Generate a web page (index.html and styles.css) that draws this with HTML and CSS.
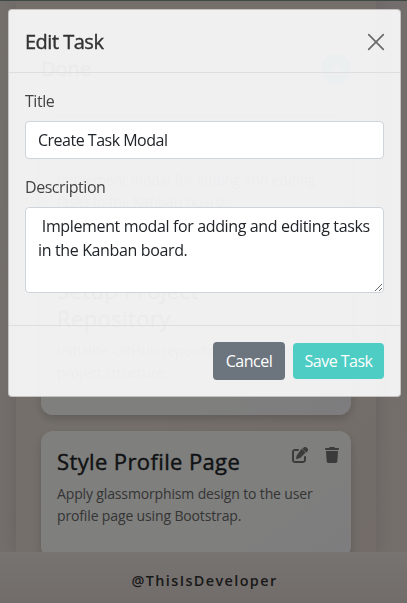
FILE: index.html
```html
<!DOCTYPE html>
<html lang="en">
<head>
<meta charset="utf-8">
<title>Kanban Board</title>
<link rel="stylesheet" href="styles.css">
</head>
<body>
<div class="page">
  <header class="nav"><span class="menu"></span></header>
  <main class="column">
    <div class="column-head"><h2>Done</h2><span class="add">+</span></div>
    <article class="card">
      <h3>Create Task</h3>
      <p>Implement modal for adding and editing<br>tasks in the Kanban board.</p>
    </article>
    <article class="card">
      <h3>Setup Project<br>Repository</h3>
      <p>Initialize GitHub repository and set up<br>project structure.</p>
    </article>
    <article class="card">
      <div class="card-head">
        <h3>Style Profile Page</h3>
        <div class="actions">
          <svg class="edit" viewBox="0 0 512 512"><path d="M472 22a75 75 0 0 0-106 0l-30 30 124 124 30-30a75 75 0 0 0 0-106zM172 242c-6 6-11 14-14 22l-30 89c-3 9 0 18 6 25s16 9 25 6l89-30c8-3 15-7 22-14l168-168-124-124zM96 64C43 64 0 107 0 160v256c0 53 43 96 96 96h256c53 0 96-43 96-96v-96a32 32 0 0 0-64 0v96c0 18-14 32-32 32H96c-18 0-32-14-32-32V160c0-18 14-32 32-32h96a32 32 0 0 0 0-64z"/></svg>
          <svg class="trash" viewBox="0 0 448 512"><path d="M135 18 128 32H32a32 32 0 0 0 0 64h384a32 32 0 0 0 0-64h-96l-7-14A32 32 0 0 0 284 0H164c-12 0-23 7-29 18zM416 128H32l21 339a48 48 0 0 0 48 45h246a48 48 0 0 0 48-45z"/></svg>
        </div>
      </div>
      <p>Apply glassmorphism design to the user<br>profile page using Bootstrap.</p>
    </article>
  </main>
  <footer class="footer">@ThisIsDeveloper</footer>
</div>
<div class="overlay">
  <form class="modal">
    <div class="modal-head">
      <h1>Edit Task</h1>
      <svg class="close" viewBox="0 0 16 16"><path d="M.7.7l14.6 14.6M15.3.7L.7 15.3"/></svg>
    </div>
    <div class="modal-body">
      <label class="title-label" for="title">Title</label>
      <input id="title" value="Create Task Modal">
      <label class="desc-label" for="desc">Description</label>
      <textarea id="desc"> Implement modal for adding and editing tasks in the Kanban board.</textarea>
    </div>
    <div class="modal-foot">
      <button class="cancel" type="button">Cancel</button>
      <button class="save" type="button">Save Task</button>
    </div>
  </form>
</div>
</body>
</html>
```
FILE: styles.css
```css
* { box-sizing: border-box; }
body {
  margin: 0;
  height: 603px;
  overflow: hidden;
  font-family: "Segoe UI", "Open Sans", "Noto Sans", sans-serif;
  font-size: 16px;
  line-height: 24px;
  color: #212529;
}
h1, h2, h3, p { margin: 0; font-weight: 500; }
.page {
  isolation: isolate;
  height: 603px;
  overflow: hidden;
  display: flex;
  flex-direction: column;
  background: linear-gradient(100deg, #e9e0d7, #e3d9d7 50%, #e8ded5);
}
.nav { flex: none; position: relative; z-index: 1; height: 1px; background: #7d9188; }
.menu {
  position: absolute;
  top: 31px;
  right: 23px;
  width: 13px;
  height: 12px;
  border-top: 2px solid #999;
  border-bottom: 2px solid #999;
}
.menu::after {
  content: "";
  display: block;
  height: 2px;
  margin-top: 3px;
  background: #999;
}
.column {
  flex: none;
  height: 551px;
  margin: 0 31px 0 16px;
  padding: 53px 25px 0;
  overflow: visible;
  background: linear-gradient(135deg, #e8dfd7, #e9dfd6 60%, #e6d9d2);
  box-shadow: 0 0 16px rgba(70, 50, 70, .16);
}
.column-head {
  display: flex;
  justify-content: space-between;
  height: 63px;
}
.column-head h2 { font-size: 20px; line-height: 30px; -webkit-text-stroke: .4px; }
.add {
  width: 30px;
  height: 30px;
  border-radius: 50%;
  background: #4ecdc4;
  color: #fff;
  text-align: center;
  font-size: 20px;
  font-weight: 700;
  line-height: 32px;
}
.card {
  margin-bottom: 16px;
  padding: 16px 16px 15px;
  border-radius: 12px;
  background: linear-gradient(145deg, #fefefb 70%, #fafafe);
  box-shadow: 0 4px 9px rgba(0, 0, 0, .16);
}
.card h3 {
  font-size: 22px;
  line-height: 28px;
  letter-spacing: .38px;
  white-space: nowrap;
  -webkit-text-stroke: .4px;
}
.card p {
  margin: 8px 0 16px;
  font-size: 14px;
  line-height: 22px;
  font-weight: 400;
  letter-spacing: -.14px;
  color: #6b6b6b;
  white-space: nowrap;
}
.card-head { display: flex; justify-content: space-between; }
.actions { display: flex; gap: 17px; margin-right: -4px; }
.actions svg { height: 16px; fill: #777; }
.edit { width: 16px; }
.trash { width: 14px; }
.footer {
  flex: none;
  position: relative;
  height: 51px;
  padding-top: 5px;
  background: linear-gradient(#efe7e2, #e4dad5);
  color: #333;
  font-size: 14.4px;
  font-weight: 600;
  line-height: 48px;
  letter-spacing: 1.4px;
  text-indent: 2px;
  text-align: center;
}
.overlay {
  position: fixed;
  inset: 0;
  padding: 9px 6px 0 8px;
  background: rgba(0, 0, 0, .5);
}
.modal {
  height: 388px;
  border: 1px solid rgba(150, 150, 150, .5);
  border-radius: 4px;
  background: rgba(247, 247, 248, .95);
  overflow: hidden;
}
.modal-head {
  height: 63px;
  padding: 1px 16px 0;
  display: flex;
  align-items: center;
  justify-content: space-between;
  border-bottom: 1px solid #dedede;
}
.modal-head h1 {
  font-size: 20px;
  line-height: 30px;
  font-weight: 500;
  letter-spacing: -.5px;
  color: #333;
  -webkit-text-stroke: .4px;
}
.close { width: 16px; height: 16px; fill: none; stroke: #6a6a6a; stroke-width: 1.7; stroke-linecap: round; overflow: visible; }
.modal-body { height: 253px; padding: 16px; border-bottom: 1px solid #dedede; }
label { display: block; height: 32px; color: #444; letter-spacing: -.45px; }
input, textarea {
  display: block;
  width: 100%;
  margin: 0 0 16px;
  border: 1px solid #ced4da;
  border-radius: 4px;
  background: #fff;
  color: #212529;
  font: inherit;
  letter-spacing: -.5px;
  padding: 6px 12px;
}
input { height: 38px; }
textarea { height: 86px; letter-spacing: -.36px; }
.modal-foot {
  height: 70px;
  padding: 0 16px;
  display: flex;
  align-items: center;
  justify-content: flex-end;
  gap: 8px;
}
button { border: 0; border-radius: 4px; padding: 0; color: #fff; font: inherit; letter-spacing: -.5px; white-space: nowrap; }
.cancel { width: 72px; height: 38px; background: #6c757d; }
.save { width: 91px; height: 36px; background: #4ecdc4; }
```
